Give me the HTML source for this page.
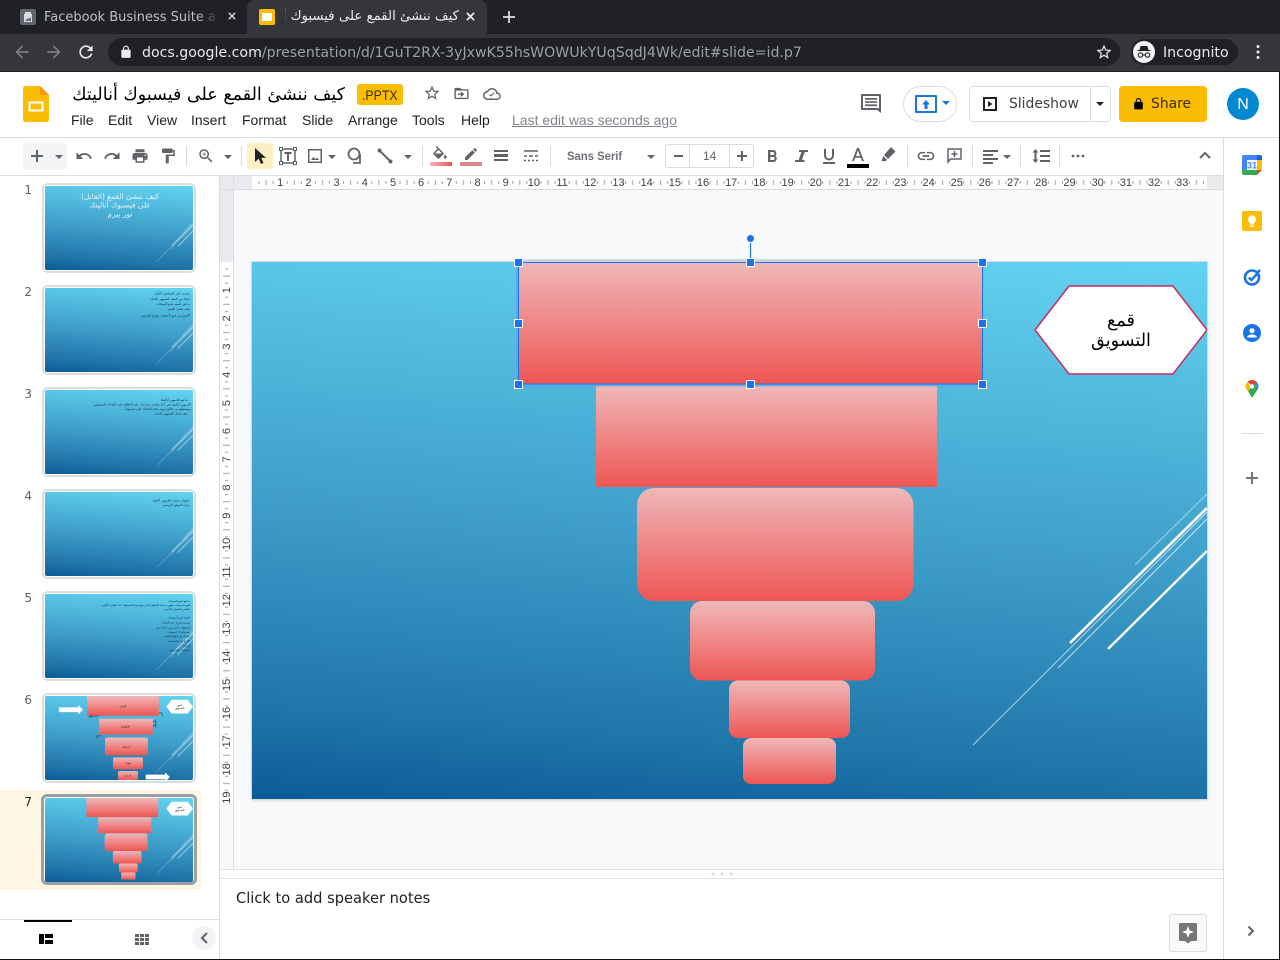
<!DOCTYPE html>
<html lang="en"><head><meta charset="utf-8"><title>Slides</title>
<style>
html,body{margin:0;padding:0;width:1280px;height:960px;overflow:hidden;background:#fff}
body{position:relative;font-family:"Liberation Sans","DejaVu Sans",sans-serif;color:#3c4043}
.a,.i,.t,.c,.s{position:absolute}
.t{white-space:nowrap}
.i{fill:#5f6368}
.c{width:0;height:0;border-left:4px solid transparent;border-right:4px solid transparent;border-top:4px solid #5f6368}
.s{width:1px;height:20px;top:146px;background:#dadce0}
.dv{font-family:"DejaVu Sans","Liberation Sans",sans-serif}
.m{top:112px;font-size:14px;color:#202124;line-height:16px}
.num{position:absolute;left:0;width:32px;text-align:right;font-size:12px;line-height:14px;color:#5f6368;font-family:"DejaVu Sans",sans-serif}
.th{position:absolute;left:42px;width:150px;height:86px;border:2px solid #dadce0;border-radius:6px;background:#fff}
.th svg{position:absolute;left:1px;top:1px;width:148px;height:84px;border-radius:2px}
</style></head><body>
<svg width="0" height="0" style="position:absolute">
<defs>
<linearGradient id="sky" gradientUnits="userSpaceOnUse" x1="955" y1="0" x2="909" y2="606">
<stop offset="0" stop-color="#62d3f1"/><stop offset=".5" stop-color="#3f9fca"/><stop offset=".85" stop-color="#1f76a9"/><stop offset="1" stop-color="#0c5b96"/></linearGradient>
<linearGradient id="red" x1="0" y1="0" x2="0" y2="1"><stop offset="0" stop-color="#efb8b8"/><stop offset="1" stop-color="#ee5654"/></linearGradient>
<symbol id="bg" viewBox="0 0 955 537" preserveAspectRatio="none">
<rect width="955" height="537" fill="url(#sky)"/>
<g stroke="#fff" fill="none">
<path d="M883 303L955 232" stroke-width="1" opacity=".5"/>
<path d="M818 381L955 246" stroke-width="2.6"/>
<path d="M721 483L955 250" stroke-width="1" opacity=".65"/>
<path d="M806 406L955 257" stroke-width="1" opacity=".7"/>
<path d="M856 387L955 289" stroke-width="2.4"/>
</g></symbol>
<symbol id="bgt" viewBox="0 0 955 537" preserveAspectRatio="none">
<rect width="955" height="537" fill="url(#sky)"/>
<g stroke="#fff" fill="none" opacity=".55">
<path d="M883 303L955 232" stroke-width="3"/>
<path d="M818 381L955 246" stroke-width="6"/>
<path d="M721 483L955 250" stroke-width="3"/>
<path d="M806 406L955 257" stroke-width="3"/>
<path d="M856 387L955 289" stroke-width="6"/>
</g></symbol>
<symbol id="hex" viewBox="0 0 955 537" preserveAspectRatio="none">
<path d="M783 68L817 24H921L955 68L921 112H817Z" fill="#fff" stroke="#c92c60" stroke-width="1.500"/></symbol>
<symbol id="hext" viewBox="0 0 955 537" preserveAspectRatio="none">
<path d="M783 68L817 24H921L955 68L921 112H817Z" fill="#fff"/></symbol>
<symbol id="fun" viewBox="0 0 955 537" preserveAspectRatio="none">
<rect x="267" y="0" width="464" height="122" fill="url(#red)"/>
<rect x="344" y="123" width="341" height="102" fill="url(#red)"/>
<rect x="385" y="226" width="276.500" height="113" rx="17" fill="url(#red)"/>
<rect x="438" y="339" width="185" height="79.500" rx="12" fill="url(#red)"/>
<rect x="477" y="418.500" width="121" height="57.500" rx="9" fill="url(#red)"/>
<rect x="491" y="476" width="93" height="46" rx="8" fill="url(#red)"/>
</symbol>
</defs></svg>

<!-- Chrome tab strip -->
<div class="a" style="left:0;top:0;width:1280px;height:34px;background:#202124"></div>
<div class="a" style="left:247px;top:0;width:240px;height:36px;background:#35363a;border-radius:8px 8px 0 0"></div>
<div class="a" style="left:20px;top:9px;width:16px;height:16px;background:#5f6670;border-radius:2px"></div>
<svg class="a" style="left:20px;top:9px" width="16" height="16" viewBox="0 0 16 16"><path d="M5 3h6v2h1v8H4V5h1z" fill="#d8dadd"/><path d="M5 12l3-3 1 1 2-2v4z" fill="#5f6670"/></svg>
<div class="t dv" style="left:44px;top:9px;width:174px;overflow:hidden;font-size:13px;line-height:17px;color:#bdc1c6">Facebook Business Suite and</div>
<div class="a" style="left:198px;top:6px;width:20px;height:22px;background:linear-gradient(90deg,rgba(32,33,36,0),#202124)"></div>
<svg class="a" style="left:228px;top:12px" width="8" height="8" viewBox="0 0 10 10"><path d="M1 1l8 8M9 1L1 9" stroke="#c4c7cc" stroke-width="2"/></svg>
<div class="a" style="left:259px;top:9px;width:16px;height:16px;background:#fbbc04;border-radius:2px"></div>
<div class="a" style="left:262px;top:13px;width:10px;height:8px;background:#fff"></div>
<div class="t dv" dir="rtl" style="left:285px;top:7px;width:174px;overflow:hidden;font-size:13.300px;line-height:20px;color:#e8eaed;text-align:right">كيف ننشئ القمع على فيسبوك أناليتك</div>
<svg class="a" style="left:466px;top:12px" width="9" height="9" viewBox="0 0 10 10"><path d="M1 1l8 8M9 1L1 9" stroke="#e8eaed" stroke-width="2"/></svg>
<svg class="a" style="left:503px;top:11px" width="12" height="12" viewBox="0 0 14 14"><path d="M7 0v14M0 7h14" stroke="#dfe1e5" stroke-width="2"/></svg>

<!-- Chrome toolbar -->
<div class="a" style="left:0;top:34px;width:1280px;height:37px;background:#35363a"></div>
<div class="a" style="left:0;top:71px;width:1280px;height:1px;background:#1f2023"></div>
<svg class="a" style="left:12px;top:42px;fill:#7b7e83" width="20" height="20" viewBox="0 0 24 24"><path d="M20 11H7.830l5.590-5.590L12 4l-8 8 8 8 1.410-1.410L7.830 13H20v-2z"/></svg>
<svg class="a" style="left:44px;top:42px;fill:#7b7e83" width="20" height="20" viewBox="0 0 24 24"><path d="M12 4l-1.410 1.410L16.170 11H4v2h12.170l-5.580 5.590L12 20l8-8z"/></svg>
<svg class="a" style="left:76px;top:42px;fill:#e8eaed" width="20" height="20" viewBox="0 0 24 24"><path d="M17.650 6.350C16.200 4.900 14.210 4 12 4c-4.420 0-7.990 3.580-7.990 8s3.570 8 7.990 8c3.730 0 6.840-2.550 7.730-6h-2.080c-.82 2.330-3.040 4-5.650 4-3.310 0-6-2.690-6-6s2.690-6 6-6c1.660 0 3.140.69 4.220 1.780L13 11h7V4l-2.350 2.350z"/></svg>
<div class="a" style="left:108px;top:38px;width:1012px;height:28px;background:#202124;border-radius:14px"></div>
<svg class="a" style="left:119px;top:45px;fill:#e8eaed" width="14" height="14" viewBox="0 0 24 24"><path d="M18 8h-1V6c0-2.760-2.240-5-5-5S7 3.240 7 6v2H6c-1.100 0-2 .9-2 2v10c0 1.100.9 2 2 2h12c1.100 0 2-.9 2-2V10c0-1.100-.9-2-2-2zM15.100 8H8.900V6c0-1.710 1.390-3.100 3.100-3.100 1.710 0 3.100 1.390 3.100 3.100v2z"/></svg>
<div class="t dv" style="left:142px;top:44px;font-size:14.150px;line-height:18px;color:#e8eaed"><span>docs.google.com</span><span style="color:#9aa0a6">/presentation/d/1GuT2RX-3yJxwK55hsWOWUkYUqSqdJ4Wk/edit#slide=id.p7</span></div>
<svg class="a" style="left:1095px;top:43px;fill:#e8eaed" width="18" height="18" viewBox="0 0 24 24"><path d="M22 9.240l-7.190-.62L12 2 9.190 8.630 2 9.240l5.460 4.730L5.820 21 12 17.270 18.180 21l-1.630-7.030L22 9.240zM12 15.400l-3.760 2.270 1-4.280-3.320-2.880 4.380-.38L12 6.100l1.710 4.040 4.380.38-3.320 2.880 1 4.280L12 15.400z"/></svg>
<div class="a" style="left:1131px;top:39px;width:107px;height:26px;background:#202124;border-radius:13px"></div>
<svg class="a" style="left:1133px;top:41px" width="22" height="22" viewBox="0 0 22 22"><circle cx="11" cy="11" r="11" fill="#f1f3f4"/><path d="M7.500 5h7l1 4h2v1h-13V9h2z" fill="#202124"/><circle cx="7.500" cy="14" r="2.200" fill="none" stroke="#202124" stroke-width="1.100"/><circle cx="14.500" cy="14" r="2.200" fill="none" stroke="#202124" stroke-width="1.100"/><path d="M9.700 14h2.600" stroke="#202124"/></svg>
<div class="t dv" style="left:1163px;top:44px;font-size:14.150px;line-height:18px;color:#e8eaed">Incognito</div>
<svg class="a" style="left:1255px;top:44px" width="6" height="16" viewBox="0 0 6 16"><circle cx="3" cy="2.500" r="1.500" fill="#e8eaed"/><circle cx="3" cy="8" r="1.500" fill="#e8eaed"/><circle cx="3" cy="13.500" r="1.500" fill="#e8eaed"/></svg>

<!-- Docs header -->
<svg class="a" style="left:23px;top:86px" width="26" height="36" viewBox="0 0 26 36"><path d="M2.500 0H17l9 9v24.500a2.500 2.500 0 0 1-2.500 2.500h-21A2.500 2.500 0 0 1 0 33.500v-31A2.500 2.500 0 0 1 2.500 0z" fill="#fbbc04"/><path d="M17 0l9 9h-9z" fill="#f29900"/><path d="M5.500 15.500h15v10h-15z" fill="#fff"/><path d="M7.500 17.500h11v6h-11z" fill="#fbbc04"/></svg>
<div class="t dv" dir="rtl" style="left:60px;top:82px;width:285px;font-size:17.500px;line-height:26px;color:#000;text-align:right">كيف ننشئ القمع على فيسبوك أناليتك</div>
<div class="a" style="left:357px;top:84px;width:46px;height:21px;background:#fbbc04;border-radius:3px"></div>
<div class="t" style="left:362px;top:87px;font-size:14px;line-height:16px;color:#3c2f00;transform:scaleX(.88);transform-origin:left">.PPTX</div>
<svg class="i" style="left:423px;top:84px" width="18" height="18" viewBox="0 0 24 24"><path d="M22 9.240l-7.190-.62L12 2 9.190 8.630 2 9.240l5.460 4.730L5.820 21 12 17.270 18.180 21l-1.630-7.030L22 9.240zM12 15.400l-3.760 2.270 1-4.280-3.320-2.880 4.380-.38L12 6.100l1.710 4.040 4.380.38-3.320 2.880 1 4.280L12 15.400z"/></svg>
<svg class="i" style="left:453px;top:85px" width="17" height="17" viewBox="0 0 24 24"><path d="M20 6h-8l-2-2H4c-1.100 0-2 .9-2 2v12c0 1.100.9 2 2 2h16c1.100 0 2-.9 2-2V8c0-1.100-.9-2-2-2zm0 12H4V8h16v10zM11 17v-3H7v-2h4V9l5 4-5 4z"/></svg>
<svg class="i" style="left:483px;top:85px" width="18" height="18" viewBox="0 0 24 24"><path d="M19.350 10.040A7.490 7.490 0 0 0 12 4a7.500 7.500 0 0 0-6.650 4.040A6 6 0 0 0 6 20h13a5 5 0 0 0 .35-9.960zM19 18H6a4 4 0 0 1-.44-7.970l1.070-.11.5-.95A5.460 5.460 0 0 1 12 6c2.620 0 4.880 1.860 5.390 4.430l.3 1.500 1.530.11A3 3 0 0 1 19 18zm-8.500-2.500L8 13l1-1 1.500 1.500L14.500 10l1 1z"/></svg>
<div class="t m" style="left:71px">File</div>
<div class="t m" style="left:108px">Edit</div>
<div class="t m" style="left:147px">View</div>
<div class="t m" style="left:191px">Insert</div>
<div class="t m" style="left:242px">Format</div>
<div class="t m" style="left:302px">Slide</div>
<div class="t m" style="left:348px">Arrange</div>
<div class="t m" style="left:412px">Tools</div>
<div class="t m" style="left:461px">Help</div>
<div class="t m" style="left:512px;color:#80868b;text-decoration:underline">Last edit was seconds ago</div>
<svg class="i" style="left:859px;top:92px;fill:#5f6368" width="24" height="24" viewBox="0 0 24 24"><path d="M3 2h18a1 1 0 0 1 1 1v18l-4-3H3a1 1 0 0 1-1-1V3a1 1 0 0 1 1-1zm1 2v12h15l1 .8V4zm2 2h12v1.700H6zm0 3.200h12v1.700H6zm0 3.200h12v1.700H6z"/></svg>
<div class="a" style="left:903px;top:86px;width:52px;height:34px;border:1px solid #dadce0;border-radius:18px;background:#fff"></div>
<div class="a" style="left:915px;top:95px;width:18px;height:14px;border:2px solid #1a73e8;border-radius:1px"></div>
<svg class="a" style="left:920px;top:98px" width="12" height="14" viewBox="0 0 12 14"><path d="M6 2L2 6.500h2.500V11h3V6.500H10z" fill="#1a73e8"/></svg>
<div class="c" style="left:942px;top:101px;border-top-color:#1a73e8"></div>
<div class="a" style="left:969px;top:86px;width:140px;height:34px;border:1px solid #dadce0;border-radius:4px;background:#fff"></div>
<div class="a" style="left:1090px;top:86px;width:1px;height:36px;background:#dadce0"></div>
<svg class="a" style="left:983px;top:97px" width="14" height="14" viewBox="0 0 14 14"><path d="M1 1h12v12H1z" fill="none" stroke="#202124" stroke-width="2"/><path d="M5 4l4.500 3L5 10z" fill="#202124"/></svg>
<div class="t dv" style="left:1009px;top:96px;font-size:13.900px;line-height:17px;color:#3c4043">Slideshow</div>
<div class="c" style="left:1096px;top:102px;border-top-color:#202124"></div>
<div class="a" style="left:1119px;top:86px;width:88px;height:36px;background:#fbbc04;border-radius:4px"></div>
<svg class="a" style="left:1132px;top:97px" width="13" height="14" viewBox="0 0 24 24"><path d="M18 8h-1V6c0-2.760-2.240-5-5-5S7 3.240 7 6v2H6c-1.100 0-2 .9-2 2v10c0 1.100.9 2 2 2h12c1.100 0 2-.9 2-2V10c0-1.100-.9-2-2-2zM15.100 8H8.900V6c0-1.710 1.390-3.100 3.100-3.100 1.710 0 3.100 1.390 3.100 3.100v2z" fill="#000"/></svg>
<div class="t dv" style="left:1151px;top:96px;font-size:13.900px;line-height:17px;color:#3c2f00">Share</div>
<div class="a" style="left:1227px;top:88px;width:32px;height:32px;border-radius:50%;background:#0288d1;color:#fff;font-size:16px;line-height:33px;text-align:center">N</div>

<!-- Toolbar -->
<div class="a" style="left:0;top:137px;width:1280px;height:1px;background:#dadce0"></div>
<div class="a" style="left:0;top:175px;width:1223px;height:1px;background:#dadce0"></div>
<div class="a" style="left:23px;top:143px;width:44px;height:26px;background:#f1f3f4;border-radius:3px"></div>
<svg class="a" style="left:31px;top:150px" width="12" height="12" viewBox="0 0 12 12"><path d="M6 0v12M0 6h12" stroke="#5f6368" stroke-width="2"/></svg>
<div class="c" style="left:55px;top:155px"></div>
<svg class="i" style="left:75px;top:147px" width="18" height="18" viewBox="0 0 24 24"><path d="M12.500 8c-2.650 0-5.050.99-6.900 2.600L2 7v9h9l-3.620-3.620c1.390-1.160 3.160-1.880 5.120-1.880 3.540 0 6.550 2.310 7.600 5.500l2.370-.78C21.080 11.030 17.150 8 12.500 8z"/></svg>
<svg class="i" style="left:103px;top:147px" width="18" height="18" viewBox="0 0 24 24"><path d="M18.400 10.600C16.550 8.990 14.150 8 11.500 8c-4.650 0-8.580 3.030-9.960 7.220L3.900 16c1.050-3.190 4.050-5.500 7.600-5.500 1.950 0 3.730.72 5.120 1.880L13 16h9V7l-3.600 3.600z"/></svg>
<svg class="i" style="left:131px;top:147px" width="18" height="18" viewBox="0 0 24 24"><path d="M19 8H5c-1.660 0-3 1.340-3 3v6h4v4h12v-4h4v-6c0-1.660-1.340-3-3-3zm-3 11H8v-5h8v5zm3-7c-.55 0-1-.45-1-1s.45-1 1-1 1 .45 1 1-.45 1-1 1zm-1-9H6v4h12V3z"/></svg>
<svg class="i" style="left:159px;top:147px" width="18" height="18" viewBox="0 0 24 24"><path d="M18 4V3c0-.55-.45-1-1-1H5c-.55 0-1 .45-1 1v4c0 .55.45 1 1 1h12c.55 0 1-.45 1-1V6h1v4H9v11c0 .55.45 1 1 1h2c.55 0 1-.45 1-1v-9h8V4h-3z"/></svg>
<div class="s" style="left:186px"></div>
<svg class="i" style="left:197px;top:147px" width="18" height="18" viewBox="0 0 24 24"><path d="M15.500 14h-.79l-.28-.27C15.410 12.590 16 11.110 16 9.500 16 5.910 13.090 3 9.500 3S3 5.910 3 9.500 5.910 16 9.500 16c1.610 0 3.090-.59 4.230-1.570l.27.28v.79l5 4.990L20.490 19l-4.990-5zm-6 0C7.010 14 5 11.990 5 9.500S7.010 5 9.500 5 14 7.010 14 9.500 11.990 14 9.500 14zM10 7H9v2H7v1h2v2h1v-2h2V9h-2z"/></svg>
<div class="c" style="left:224px;top:155px"></div>
<div class="s" style="left:241px"></div>
<div class="a" style="left:247px;top:143px;width:26px;height:26px;background:#feefc3;border-radius:3px"></div>
<svg class="a" style="left:254px;top:147px" width="14" height="18" viewBox="0 0 14 18"><path d="M1 1v14l3.700-3.300L7 17l2.500-1.100-2.300-5H12z" fill="#202124"/></svg>
<svg class="a" style="left:279px;top:147px" width="18" height="18" viewBox="0 0 18 18"><path d="M2 2h14v14H2z" fill="none" stroke="#5f6368" stroke-width="1.500"/><path d="M5.500 5h7v2h-2.500v7H8V7H5.500z" fill="#5f6368"/><g fill="#fff" stroke="#5f6368"><rect x=".5" y=".5" width="3" height="3"/><rect x="14.500" y=".5" width="3" height="3"/><rect x=".5" y="14.500" width="3" height="3"/><rect x="14.500" y="14.500" width="3" height="3"/></g></svg>
<svg class="i" style="left:307px;top:148px" width="16" height="16" viewBox="0 0 16 16"><path d="M1 1h14v14H1zm1.500 1.500v11h11v-11zM4 12l2.500-3 2 2.300L10 9.500l2 2.500z" fill-rule="evenodd"/></svg>
<div class="c" style="left:328px;top:155px"></div>
<svg class="a" style="left:347px;top:147px" width="18" height="18" viewBox="0 0 18 18"><circle cx="7" cy="7" r="5.500" fill="none" stroke="#5f6368" stroke-width="1.800"/><path d="M13 7v9H6" fill="none" stroke="#5f6368" stroke-width="1.800"/></svg>
<svg class="a" style="left:377px;top:148px" width="16" height="16" viewBox="0 0 16 16"><path d="M2.500 2.500l11 11" stroke="#5f6368" stroke-width="2"/><circle cx="2.500" cy="2.500" r="2" fill="#5f6368"/><circle cx="13.500" cy="13.500" r="2" fill="#5f6368"/></svg>
<div class="c" style="left:404px;top:155px"></div>
<div class="s" style="left:422px"></div>
<svg class="i" style="left:431px;top:146px" width="18" height="18" viewBox="0 0 24 24"><path d="M16.560 8.940L7.620 0 6.210 1.410l2.380 2.380-5.150 5.150c-.59.590-.59 1.540 0 2.120l5.500 5.500c.29.29.68.44 1.060.44s.77-.15 1.060-.44l5.500-5.500c.59-.58.59-1.530 0-2.120zM5.210 10L10 5.210 14.790 10H5.210zM19 11.500s-2 2.170-2 3.500c0 1.100.9 2 2 2s2-.9 2-2c0-1.330-2-3.500-2-3.500z"/></svg>
<div class="a" style="left:430px;top:162px;width:22px;height:4px;background:linear-gradient(90deg,#efb8b8,#ee5654)"></div>
<svg class="i" style="left:463px;top:146px" width="16" height="16" viewBox="0 0 24 24"><path d="M3 17.250V21h3.750L17.810 9.940l-3.750-3.750L3 17.250zM20.710 7.040a1 1 0 0 0 0-1.410l-2.340-2.340a1 1 0 0 0-1.410 0l-1.830 1.830 3.750 3.750 1.830-1.830z"/></svg>
<div class="a" style="left:460px;top:162px;width:22px;height:4px;background:#d48a8a"></div>
<div class="a" style="left:494px;top:150px;width:14px;height:2px;background:#5f6368"></div>
<div class="a" style="left:494px;top:154px;width:14px;height:3px;background:#5f6368"></div>
<div class="a" style="left:494px;top:159px;width:14px;height:2px;background:#5f6368"></div>
<svg class="a" style="left:524px;top:150px" width="14" height="12" viewBox="0 0 14 12"><path d="M0 1h14M0 6h3M5 6h4M11 6h3M0 10.500h2M4 10.500h2M8 10.500h2M12 10.500h2" stroke="#5f6368" stroke-width="1.600"/></svg>
<div class="s" style="left:550px"></div>
<div class="t" style="left:567px;top:149px;font-size:12px;line-height:14px;color:#5f6368;transform:scaleX(.94);transform-origin:left;font-weight:bold;opacity:.9">Sans Serif</div>
<div class="c" style="left:647px;top:155px"></div>
<div class="a" style="left:665px;top:144px;width:87px;height:22px;border:1px solid #dadce0;border-radius:3px"></div>
<div class="a" style="left:689px;top:144px;width:1px;height:24px;background:#dadce0"></div>
<div class="a" style="left:729px;top:144px;width:1px;height:24px;background:#dadce0"></div>
<div class="a" style="left:674px;top:155px;width:9px;height:2px;background:#5f6368"></div>
<div class="t" style="left:703px;top:149px;font-size:12px;line-height:14px;color:#5f6368">14</div>
<svg class="a" style="left:737px;top:151px" width="10" height="10" viewBox="0 0 10 10"><path d="M5 0v10M0 5h10" stroke="#5f6368" stroke-width="2"/></svg>
<svg class="a" style="left:766px;top:149px" width="13" height="14" viewBox="0 0 13 14"><path d="M2 1h5a3.300 3.300 0 0 1 2.300 5.700A3.500 3.500 0 0 1 7.500 13H2zm2.300 2v3h2.400a1.500 1.500 0 0 0 0-3zm0 5v3h2.900a1.500 1.500 0 0 0 0-3z" fill="#5f6368" fill-rule="evenodd"/></svg>
<svg class="a" style="left:795px;top:150px" width="13" height="12" viewBox="0 0 13 12"><path d="M4 0h9v2h-3.300L7 10h2.500v2H0v-2h3.700L6.400 2H4z" fill="#5f6368"/></svg>
<svg class="a" style="left:822px;top:149px" width="14" height="15" viewBox="0 0 14 15"><path d="M3 0v6.500a4 4 0 0 0 8 0V0" fill="none" stroke="#5f6368" stroke-width="2"/><path d="M1 13h12v2H1z" fill="#5f6368"/></svg>
<svg class="a" style="left:851px;top:148px" width="14" height="13" viewBox="0 0 14 13"><path d="M6 0h2l5 13h-2l-1.200-3.300H4.200L3 13H1zM4.900 8h4.200L7 2.400z" fill="#5f6368" fill-rule="evenodd"/></svg>
<div class="a" style="left:847px;top:164px;width:22px;height:4px;background:#000"></div>
<svg class="i" style="left:880px;top:147px" width="16" height="16" viewBox="0 0 16 16"><path d="M11 0l4.500 4.500L8 12 4 8zM3.200 9l3.800 3.800-1.300 1.300H1.500z"/></svg>
<div class="s" style="left:907px"></div>
<svg class="i" style="left:916px;top:146px" width="20" height="20" viewBox="0 0 24 24"><path d="M3.900 12c0-1.710 1.390-3.100 3.100-3.100h4V7H7c-2.760 0-5 2.240-5 5s2.240 5 5 5h4v-1.900H7c-1.710 0-3.100-1.390-3.100-3.100zM8 13h8v-2H8v2zm9-6h-4v1.900h4c1.710 0 3.100 1.390 3.100 3.100s-1.390 3.100-3.100 3.100h-4V17h4c2.760 0 5-2.240 5-5s-2.240-5-5-5z"/></svg>
<svg class="a" style="left:947px;top:148px" width="15" height="16" viewBox="0 0 15 16"><path d="M1 1h13v10H3.500L1 14z" fill="none" stroke="#5f6368" stroke-width="1.500"/><path d="M7.500 3v6M4.500 6h6" stroke="#5f6368" stroke-width="1.500"/></svg>
<div class="s" style="left:972px"></div>
<div class="a" style="left:983px;top:150px;width:15px;height:2px;background:#5f6368"></div>
<div class="a" style="left:983px;top:154px;width:10px;height:2px;background:#5f6368"></div>
<div class="a" style="left:983px;top:158px;width:15px;height:2px;background:#5f6368"></div>
<div class="a" style="left:983px;top:162px;width:10px;height:2px;background:#5f6368"></div>
<div class="c" style="left:1003px;top:155px"></div>
<div class="s" style="left:1020px"></div>
<svg class="a" style="left:1032px;top:148px" width="18" height="16" viewBox="0 0 18 16"><path d="M3.500 1L.5 4.500h2v7h-2l3 3.500 3-3.500h-2v-7h2zM8 2h10v2H8zM8 7h10v2H8zM8 12h10v2H8z" fill="#5f6368"/></svg>
<div class="s" style="left:1059px"></div>
<svg class="a" style="left:1071px;top:154px" width="14" height="4" viewBox="0 0 14 4"><circle cx="2" cy="2" r="1.400" fill="#5f6368"/><circle cx="7" cy="2" r="1.400" fill="#5f6368"/><circle cx="12" cy="2" r="1.400" fill="#5f6368"/></svg>
<svg class="a" style="left:1199px;top:151px" width="12" height="8" viewBox="0 0 12 8"><path d="M1 7l5-5 5 5" fill="none" stroke="#5f6368" stroke-width="2"/></svg>

<!-- Filmstrip -->
<div class="a" style="left:219px;top:176px;width:1px;height:784px;background:#dadce0"></div>
<div class="a" style="left:0;top:790px;width:201px;height:100px;background:#fdf6e3;border-radius:0 4px 4px 0"></div>
<div class="num" style="top:183px">1</div>
<div class="num" style="top:285px">2</div>
<div class="num" style="top:387px">3</div>
<div class="num" style="top:489px">4</div>
<div class="num" style="top:591px">5</div>
<div class="num" style="top:693px">6</div>
<div class="num" style="top:795px;color:#202124">7</div>

<div class="th" style="top:183px"><svg viewBox="0 0 955 537" preserveAspectRatio="none"><use href="#bgt"/><g fill="#e2f5fb" font-size="48" text-anchor="middle" font-family="DejaVu Sans"><text x="484" y="82">كيف ننشئ القمع (القابل)</text><text x="484" y="138">على فيسبوك أناليتك</text><text x="484" y="196">نور بيرم</text></g></svg></div>
<div class="th" style="top:285px"><svg viewBox="0 0 955 537" preserveAspectRatio="none"><use href="#bgt"/><g fill="#0f2f45" font-size="20" text-anchor="end" font-family="DejaVu Sans"><text x="935" y="42">مقدمة على الجماهير أناليتك</text><text x="935" y="76">لماذا من المفيد الجمهور أناليتك</text><text x="935" y="110">ما هي أهمية قمع المبيعات</text><text x="935" y="142">كيف ننشئ القمع</text><text x="935" y="182">الفرق بين قمع المبيعات وقمع التسويق</text></g></svg></div>
<div class="th" style="top:387px"><svg viewBox="0 0 955 537" preserveAspectRatio="none"><use href="#bgt"/><g fill="#0f2f45" font-size="20" text-anchor="end" font-family="DejaVu Sans"><text x="920" y="70">ما هو الجمهور أناليتك</text><text x="940" y="100">الجمهور أناليتك هي أداة مجانية تساعدك على الاطلاع على البيانات المسوقين</text><text x="940" y="128">ويستطيع من خلالها رؤية نتائج إعلاناتك على فيسبوك</text><text x="920" y="156">كيف يعمل الجمهور أناليتك</text></g></svg></div>
<div class="th" style="top:489px"><svg viewBox="0 0 955 537" preserveAspectRatio="none"><use href="#bgt"/><g fill="#0f2f45" font-size="20" text-anchor="end" font-family="DejaVu Sans"><text x="935" y="60">خطوات إنشاء الجمهور أناليتك</text><text x="935" y="90">زيارة الموقع الرسمي</text></g></svg></div>
<div class="th" style="top:591px"><svg viewBox="0 0 955 537" preserveAspectRatio="none"><use href="#bgt"/><g fill="#0f2f45" font-size="18" text-anchor="end" font-family="DejaVu Sans"><text x="935" y="50">ما هو قمع المبيعات</text><text x="935" y="76">قمع المبيعات يظهر مرحلة القاطعة التي يقوم بها المستهلك عند الشراء الأولى</text><text x="935" y="102">الفعلي بالعميل الأخيرة</text><text x="935" y="156">أهمية قمع المبيعات</text><text x="935" y="188">تقسيم الزوار إلى العملاء</text><text x="935" y="222">الخطوات المدروسة أثناء البيع</text><text x="935" y="250">ستساعدك المبيعات</text><text x="935" y="276">الفرق بين أنواع القمع</text><text x="935" y="306">القرارات والقمعيات</text><text x="935" y="336">الزيادة</text><text x="935" y="366">المبيعات التسويق</text></g></svg></div>
<div class="th" style="top:693px"><svg viewBox="0 0 955 537" preserveAspectRatio="none"><use href="#bgt"/><use href="#hext"/>
<rect x="271" y="0" width="464" height="126" fill="url(#red)"/><rect x="348" y="145" width="348" height="101" fill="url(#red)"/><rect x="387" y="265" width="277" height="114" rx="14" fill="url(#red)"/><rect x="439" y="392" width="193" height="76" rx="10" fill="url(#red)"/><rect x="471" y="480" width="129" height="57" rx="8" fill="url(#red)"/>
<path d="M90 73H215V58L245 88 215 118V103H90zM650 503H775V488L806 518 775 548V533H650z" fill="#fff"/>
<g fill="none" stroke="#1b3a4d" stroke-width="4"><path d="M285 140V128H345V128M300 140V125M735 108H755V130M696 160H715V200M696 190H715M335 255H355V250M335 255V272"/></g>
<g fill="#222" font-size="18" text-anchor="middle" font-family="DejaVu Sans"><text x="503" y="70">الوعي</text><text x="520" y="200">الاهتمام</text><text x="525" y="328">التحويل</text><text x="535" y="436">الولاء</text><text x="535" y="514">الدعم</text><text x="869" y="64">قمع</text><text x="869" y="84">التسويق</text></g></svg></div>
<div class="th" style="top:794px;border:3px solid #9aa0a6;left:41px;height:85px"><svg viewBox="0 0 955 537" preserveAspectRatio="none"><use href="#bgt"/><use href="#fun"/><use href="#hext"/><g fill="#222" font-size="18" text-anchor="middle" font-family="DejaVu Sans"><text x="869" y="64">قمع</text><text x="869" y="84">التسويق</text></g></svg></div>

<div class="a" style="left:0;top:919px;width:219px;height:1px;background:#dadce0"></div>
<div class="a" style="left:24px;top:920px;width:48px;height:2px;background:#000"></div>
<svg class="a" style="left:39px;top:934px" width="14" height="10" viewBox="0 0 14 10"><path d="M0 0h5v10H0zM6 0h8v4H6zM6 6h8v4H6z" fill="#000"/></svg>
<svg class="a" style="left:135px;top:934px" width="14" height="11" viewBox="0 0 14 11"><path d="M0 0h4v3H0zM5 0h4v3H5zM10 0h4v3h-4zM0 4h4v3H0zM5 4h4v3H5zM10 4h4v3h-4zM0 8h4v3H0zM5 8h4v3H5zM10 8h4v3h-4z" fill="#5f6368"/></svg>
<div class="a" style="left:192px;top:926px;width:24px;height:24px;border-radius:50%;background:#f1f3f4"></div>
<svg class="a" style="left:200px;top:932px" width="8" height="12" viewBox="0 0 8 12"><path d="M7 1L2 6l5 5" fill="none" stroke="#5f6368" stroke-width="2"/></svg>

<!-- Canvas -->
<div class="a" style="left:220px;top:176px;width:1003px;height:693px;background:#f8f9fa"></div>
<div class="a" style="left:1223px;top:138px;width:1px;height:822px;background:#dadce0"></div>
<!-- rulers -->
<div class="a" style="left:220px;top:176px;width:1003px;height:14px;background:#e8eaed"></div>
<div class="a" style="left:220px;top:190px;width:14px;height:72px;background:#e8eaed"></div>
<div class="a" style="left:252px;top:176px;width:955px;height:13px;background:#fff"></div>
<div class="a" style="left:220px;top:262px;width:13px;height:538px;background:#fff"></div>
<div class="a" style="left:233px;top:176px;width:1px;height:693px;background:#dadce0"></div>
<div class="a" style="left:220px;top:189px;width:1003px;height:1px;background:#dadce0"></div>
<svg class="a" style="left:0;top:0;pointer-events:none" width="1280" height="960">
<defs><pattern id="tx" x="252" y="0" width="28.19" height="960" patternUnits="userSpaceOnUse"><path d="M7.050 181v3M14.100 180v5M21.140 181v3" stroke="#9aa0a6" stroke-width="1" fill="none"/></pattern>
<pattern id="ty" x="0" y="262" width="1280" height="28.19" patternUnits="userSpaceOnUse"><path d="M225 7.050h3M223 14.100h7M225 21.140h3" stroke="#9aa0a6" stroke-width="1" fill="none"/></pattern></defs>
<rect x="252" y="176" width="955" height="13" fill="url(#tx)"/>
<rect x="220" y="262" width="13" height="538" fill="url(#ty)"/>
<g transform="translate(252,186)" font-family="Liberation Sans" font-size="11" fill="#3c4043" text-anchor="middle" stroke="#fff" stroke-width="1.500" paint-order="stroke">
<text x="28.200">1</text><text x="56.400">2</text><text x="84.600">3</text><text x="112.800">4</text><text x="141">5</text><text x="169.100">6</text><text x="197.300">7</text><text x="225.500">8</text><text x="253.700">9</text><text x="281.900">10</text><text x="310.100">11</text><text x="338.300">12</text><text x="366.500">13</text><text x="394.700">14</text><text x="422.900">15</text><text x="451">16</text><text x="479.200">17</text><text x="507.400">18</text><text x="535.600">19</text><text x="563.800">20</text><text x="592">21</text><text x="620.200">22</text><text x="648.400">23</text><text x="676.600">24</text><text x="704.800">25</text><text x="732.900">26</text><text x="761.100">27</text><text x="789.300">28</text><text x="817.500">29</text><text x="845.700">30</text><text x="873.900">31</text><text x="902.100">32</text><text x="930.300">33</text></g>
<g transform="translate(230,262) rotate(-90)" font-family="Liberation Sans" font-size="11" fill="#3c4043" text-anchor="middle" stroke="#fff" stroke-width="1.500" paint-order="stroke">
<text x="-28.200">1</text><text x="-56.400">2</text><text x="-84.600">3</text><text x="-112.800">4</text><text x="-141">5</text><text x="-169.100">6</text><text x="-197.300">7</text><text x="-225.500">8</text><text x="-253.700">9</text><text x="-281.900">10</text><text x="-310.100">11</text><text x="-338.300">12</text><text x="-366.500">13</text><text x="-394.700">14</text><text x="-422.900">15</text><text x="-451">16</text><text x="-479.200">17</text><text x="-507.400">18</text><text x="-535.600">19</text></g>
</svg>

<!-- Slide -->
<div class="a" style="left:252px;top:262px;width:955px;height:537px;box-shadow:0 0 0 1px #d6d8db,0 1px 3px rgba(60,64,67,.25)"></div>
<svg class="a" style="left:252px;top:262px" width="955" height="537" viewBox="0 0 955 537"><use href="#bg" width="955" height="537"/><use href="#fun" width="955" height="537"/><use href="#hex" width="955" height="537"/></svg>
<div class="a dv" dir="rtl" style="left:1069px;top:311px;width:104px;text-align:center;font-size:17.600px;line-height:20px;color:#000">قمع<br>التسويق</div>

<!-- Selection -->
<svg class="a" style="left:505px;top:230px" width="490" height="166" viewBox="505 230 490 166">
<path d="M519 260.500H983" fill="none" stroke="#c5cfe3" stroke-width="2"/>
<path d="M517 262V385.500H983" fill="none" stroke="#5aa5ee" stroke-width="2" opacity=".8"/>
<rect x="518.500" y="262.500" width="464" height="121.500" fill="none" stroke="#1a73e8" stroke-width="1"/>
<path d="M750.500 243V258" stroke="#1a73e8" stroke-width="1.200"/>
<circle cx="750.500" cy="238.500" r="3.500" fill="#1a73e8"/>
<g fill="#1a73e8" stroke="#fff" stroke-width="1">
<rect x="514.500" y="258.500" width="8" height="8"/><rect x="746.500" y="258.500" width="8" height="8"/><rect x="978.500" y="258.500" width="8" height="8"/>
<rect x="514.500" y="319.500" width="8" height="8"/><rect x="978.500" y="319.500" width="8" height="8"/>
<rect x="514.500" y="380.500" width="8" height="8"/><rect x="746.500" y="380.500" width="8" height="8"/><rect x="978.500" y="380.500" width="8" height="8"/></g></svg>

<!-- Notes -->
<div class="a" style="left:220px;top:869px;width:1003px;height:1px;background:#e0e2e5"></div>
<div class="a" style="left:220px;top:878px;width:1003px;height:1px;background:#e0e2e5"></div>
<svg class="a" style="left:710px;top:871px" width="24" height="6" viewBox="0 0 24 6"><circle cx="3" cy="3" r="1.500" fill="#dadce0"/><circle cx="12" cy="3" r="1.500" fill="#dadce0"/><circle cx="21" cy="3" r="1.500" fill="#dadce0"/></svg>
<div class="t dv" style="left:236px;top:890px;font-size:14.650px;line-height:18px;color:#202124">Click to add speaker notes</div>
<div class="a" style="left:1169px;top:914px;width:36px;height:36px;border:1px solid #dadce0;border-radius:3px;background:#f8f9fa"></div>
<svg class="a" style="left:1179px;top:923px" width="18" height="21" viewBox="0 0 18 21"><path d="M1.500 0h15A1.500 1.500 0 0 1 18 1.500v15a1.500 1.500 0 0 1-1.500 1.500H12l-3 2.500L6 18H1.500A1.500 1.500 0 0 1 0 16.500v-15A1.500 1.500 0 0 1 1.500 0z" fill="#757575"/><path d="M9 3l1.600 4.400L15 9l-4.400 1.600L9 15l-1.600-4.400L3 9l4.400-1.600z" fill="#fff"/></svg>

<!-- Side panel -->
<svg class="a" style="left:1242px;top:155px" width="20" height="20" viewBox="0 0 20 20"><path d="M2 0h13v5H5v10H0V2a2 2 0 0 1 2-2z" fill="#4285f4"/><path d="M15 0h3a2 2 0 0 1 2 2v3h-5z" fill="#1967d2"/><path d="M15 5h5v10h-5z" fill="#fbbc04"/><path d="M0 15h15v5H2a2 2 0 0 1-2-2z" fill="#34a853"/><path d="M15 15h5l-5 5z" fill="#ea4335"/><rect x="5" y="5" width="10" height="10" fill="#fff"/><text x="10" y="13.500" font-family="Liberation Sans" font-size="9" font-weight="bold" fill="#4285f4" text-anchor="middle">31</text></svg>
<svg class="a" style="left:1242px;top:211px" width="20" height="20" viewBox="0 0 20 20"><rect width="20" height="20" rx="2" fill="#fbbc04"/><circle cx="10" cy="8.500" r="4" fill="#fff"/><rect x="8" y="11" width="4" height="2.500" fill="#fff"/><rect x="8" y="14.300" width="4" height="1.500" fill="#fff"/></svg>
<svg class="a" style="left:1243px;top:268px" width="18" height="18" viewBox="0 0 18 18"><circle cx="9" cy="9.500" r="7" fill="none" stroke="#1a73e8" stroke-width="2.600"/><path d="M5.800 9.500l2.500 2.500L15.500 4.500" fill="none" stroke="#1a73e8" stroke-width="2.400"/><circle cx="16" cy="3" r="1.500" fill="#1a73e8"/></svg>
<svg class="a" style="left:1243px;top:324px" width="18" height="18" viewBox="0 0 18 18"><circle cx="9" cy="9" r="9" fill="#1a73e8"/><circle cx="9" cy="6.700" r="2.500" fill="#fff"/><path d="M4 13.500c0-2 3-3 5-3s5 1 5 3z" fill="#fff"/></svg>
<svg class="a" style="left:1245px;top:380px" width="14" height="18" viewBox="0 0 14 18"><path d="M7 0a6.500 6.500 0 0 1 6.500 6.500c0 1.500-.5 2.500-1.200 3.500L7 18 3 11z" fill="#34a853"/><path d="M2.400 2L6 7.500l-3 4C1.500 9.500.5 8.300.5 6.500A6.400 6.400 0 0 1 2.400 2z" fill="#fbbc04"/><path d="M7 0a6.500 6.500 0 0 1 4.600 1.900L8.500 5 5 4 2.400 2A6.400 6.400 0 0 1 7 0z" fill="#ea4335"/><path d="M11.600 1.900a6.500 6.500 0 0 1 1.900 4.600c0 .7-.1 1.200-.3 1.800L9 7z" fill="#4285f4"/><circle cx="7" cy="6.500" r="2.200" fill="#fff"/></svg>
<div class="a" style="left:1242px;top:433px;width:21px;height:1px;background:#dadce0"></div>
<svg class="a" style="left:1246px;top:472px" width="12" height="12" viewBox="0 0 12 12"><path d="M6 0v12M0 6h12" stroke="#757575" stroke-width="2"/></svg>
<svg class="a" style="left:1247px;top:925px" width="8" height="12" viewBox="0 0 8 12"><path d="M1.500 1.500L6 6l-4.500 4.500" fill="none" stroke="#5f6368" stroke-width="2"/></svg>

<!-- frame -->
<div class="a" style="left:0;top:959px;width:1280px;height:1px;background:#111"></div>
<div class="a" style="left:1279px;top:72px;width:1px;height:888px;background:#111"></div>
</body></html>
